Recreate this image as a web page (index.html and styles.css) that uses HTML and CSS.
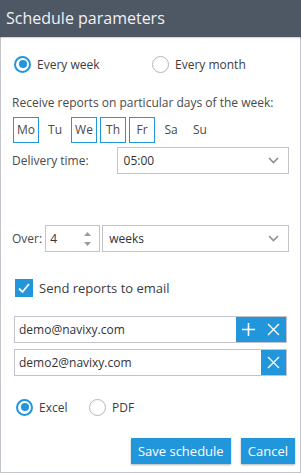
FILE: index.html
```html
<!DOCTYPE HTML>
<html>
<head>
  <title>Schedule parameters</title>
  <meta charset="utf-8">
  <link rel="stylesheet" href="styles.css">
</head>
<body>
  <div class="dialog">
    <div class="dialog-header">Schedule parameters</div>
    <div class="dialog-body">
      <div class="radio-row period-row">
        <label class="radio checked"><span class="radio-mark"></span>Every week</label>
        <label class="radio"><span class="radio-mark"></span>Every month</label>
      </div>

      <p class="days-title">Receive reports on particular days of the week:</p>
      <div class="days">
        <span class="day active">Mo</span>
        <span class="day">Tu</span>
        <span class="day active">We</span>
        <span class="day active">Th</span>
        <span class="day active">Fr</span>
        <span class="day">Sa</span>
        <span class="day">Su</span>
      </div>

      <div class="field-row delivery-row">
        <span class="field-label delivery-label">Delivery time:</span>
        <div class="select delivery-select">
          <span>05:00</span>
          <svg class="chevron" width="11" height="7" viewBox="0 0 11 7"><polyline points="1,1 5.5,5.5 10,1" fill="none" stroke="#8e8e94" stroke-width="1.6"/></svg>
        </div>
      </div>

      <div class="field-row over-row">
        <span class="field-label">Over:</span>
        <div class="number-input">
          <span>4</span>
          <svg class="spinner" width="9" height="16" viewBox="0 0 9 16"><polygon points="4.5,1 8,5 1,5" fill="#9a9aa0"/><polygon points="1,11 8,11 4.5,15" fill="#9a9aa0"/></svg>
        </div>
        <div class="select over-select">
          <span>weeks</span>
          <svg class="chevron" width="11" height="7" viewBox="0 0 11 7"><polyline points="1,1 5.5,5.5 10,1" fill="none" stroke="#8e8e94" stroke-width="1.6"/></svg>
        </div>
      </div>

      <label class="checkbox-row">
        <span class="checkbox">
          <svg width="18" height="18" viewBox="0 0 18 18"><polyline points="4,9.5 7.5,13 14,5" fill="none" stroke="#fff" stroke-width="1.8"/></svg>
        </span>
        Send reports to email
      </label>

      <div class="email-row first-email">
        <span class="email-text">demo@navixy.com</span>
        <span class="icon-btn">
          <svg width="15" height="15" viewBox="0 0 15 15"><path d="M7.5 1v13M1 7.5h13" stroke="#fff" stroke-width="1.6"/></svg>
        </span>
        <span class="icon-btn">
          <svg width="13" height="13" viewBox="0 0 13 13"><path d="M1 1l11 11M12 1L1 12" stroke="#fff" stroke-width="1.4"/></svg>
        </span>
      </div>
      <div class="email-row">
        <span class="email-text">demo2@navixy.com</span>
        <span class="icon-btn">
          <svg width="13" height="13" viewBox="0 0 13 13"><path d="M1 1l11 11M12 1L1 12" stroke="#fff" stroke-width="1.4"/></svg>
        </span>
      </div>

      <div class="radio-row format-row">
        <label class="radio checked"><span class="radio-mark"></span>Excel</label>
        <label class="radio"><span class="radio-mark"></span>PDF</label>
      </div>

      <div class="actions">
        <button class="btn save-btn">Save schedule</button>
        <button class="btn">Cancel</button>
      </div>
    </div>
  </div>
</body>
</html>
```
FILE: styles.css
```css
* {
  box-sizing: border-box;
}
html {
  font-family: "Open Sans", "Noto Sans", sans-serif;
  font-size: 12px;
  color: #3c3c3c;
}
body {
  margin: 0;
}
p {
  margin: 0;
}
.dialog {
  width: 301px;
  height: 473px;
  display: flex;
  flex-direction: column;
  background: #fff;
}
.dialog-header {
  height: 37px;
  line-height: 37px;
  padding-left: 6px;
  background-color: #4e5864;
  color: #f0f1f2;
  font-size: 16px;
  box-shadow: 0 1px 1px rgba(0, 0, 0, .15);
  position: relative;
}
.dialog-body {
  flex: 1;
  border: 1px solid #c3c3cb;
  border-top: 0;
  padding: 0 11px 0 11px;
}

/* radios */
.radio-row {
  display: flex;
  height: 18px;
  align-items: center;
}
.period-row {
  margin-top: 18px;
  padding-left: 2px;
}
.period-row .radio:first-child {
  width: 138px;
}
.radio {
  display: flex;
  align-items: center;
  cursor: pointer;
}
.radio-mark {
  width: 17px;
  height: 17px;
  border: 1px solid #b4b4bc;
  border-radius: 50%;
  margin-right: 6px;
  position: relative;
}
.radio.checked .radio-mark {
  border: 2px solid #2196db;
}
.radio.checked .radio-mark::after {
  content: "";
  position: absolute;
  left: 2.5px;
  top: 2.5px;
  width: 8px;
  height: 8px;
  border-radius: 50%;
  background-color: #2196db;
}

/* week days */
.days-title {
  margin-top: 22px;
  line-height: 16px;
  color: #4a4a4a;
}
.days {
  display: flex;
  gap: 3px;
  margin-top: 6px;
  margin-left: 1px;
}
.day {
  width: 26px;
  height: 26px;
  line-height: 24px;
  text-align: center;
  border: 1px solid transparent;
  color: #4a4a4a;
}
.day.active {
  border-color: #2196db;
}

/* fields */
.field-row {
  display: flex;
  align-items: center;
}
.field-label {
  color: #4a4a4a;
}
.delivery-row {
  margin-top: 4px;
}
.delivery-label {
  width: 105px;
}
.select,
.number-input {
  height: 27px;
  border: 1px solid #c3c3cb;
  display: flex;
  align-items: center;
  justify-content: space-between;
  padding: 0 9px 0 6px;
  color: #333;
}
.delivery-select {
  width: 173px;
}
.over-row {
  margin-top: 51px;
}
.number-input {
  width: 55px;
  margin-left: 3px;
  padding: 0 7px 0 4px;
}
.over-select {
  flex: 1;
  margin-left: 2px;
}

/* email */
.checkbox-row {
  display: flex;
  align-items: center;
  margin-top: 27px;
  margin-left: 3px;
  font-size: 13px;
  color: #3c3c3c;
}
.checkbox {
  width: 18px;
  height: 18px;
  background-color: #2196db;
  margin-right: 6px;
}
.checkbox svg {
  display: block;
}
.email-row {
  display: flex;
  height: 27px;
  margin: 6px 2px 0 2px;
  border: 1px solid #c3c3cb;
}
.first-email {
  margin-top: 19px;
}
.email-text {
  flex: 1;
  line-height: 25px;
  padding-left: 4px;
  color: #333;
}
.icon-btn {
  width: 25px;
  display: flex;
  align-items: center;
  justify-content: center;
  background-color: #2196db;
}

/* format */
.format-row {
  margin-top: 22px;
  padding-left: 4px;
}
.format-row .radio:first-child {
  width: 73px;
}

/* buttons */
.actions {
  display: flex;
  justify-content: flex-end;
  gap: 10px;
  margin-top: 22px;
  margin-right: -6px;
}
.btn {
  height: 26px;
  padding: 0 7px;
  border: 0;
  background-color: #2196db;
  color: #fff;
  font-family: inherit;
  font-size: 13px;
  white-space: nowrap;
  box-shadow: 0 1px 2px rgba(0, 0, 0, .3);
  cursor: pointer;
}
.save-btn {
  width: 100px;
}
```
